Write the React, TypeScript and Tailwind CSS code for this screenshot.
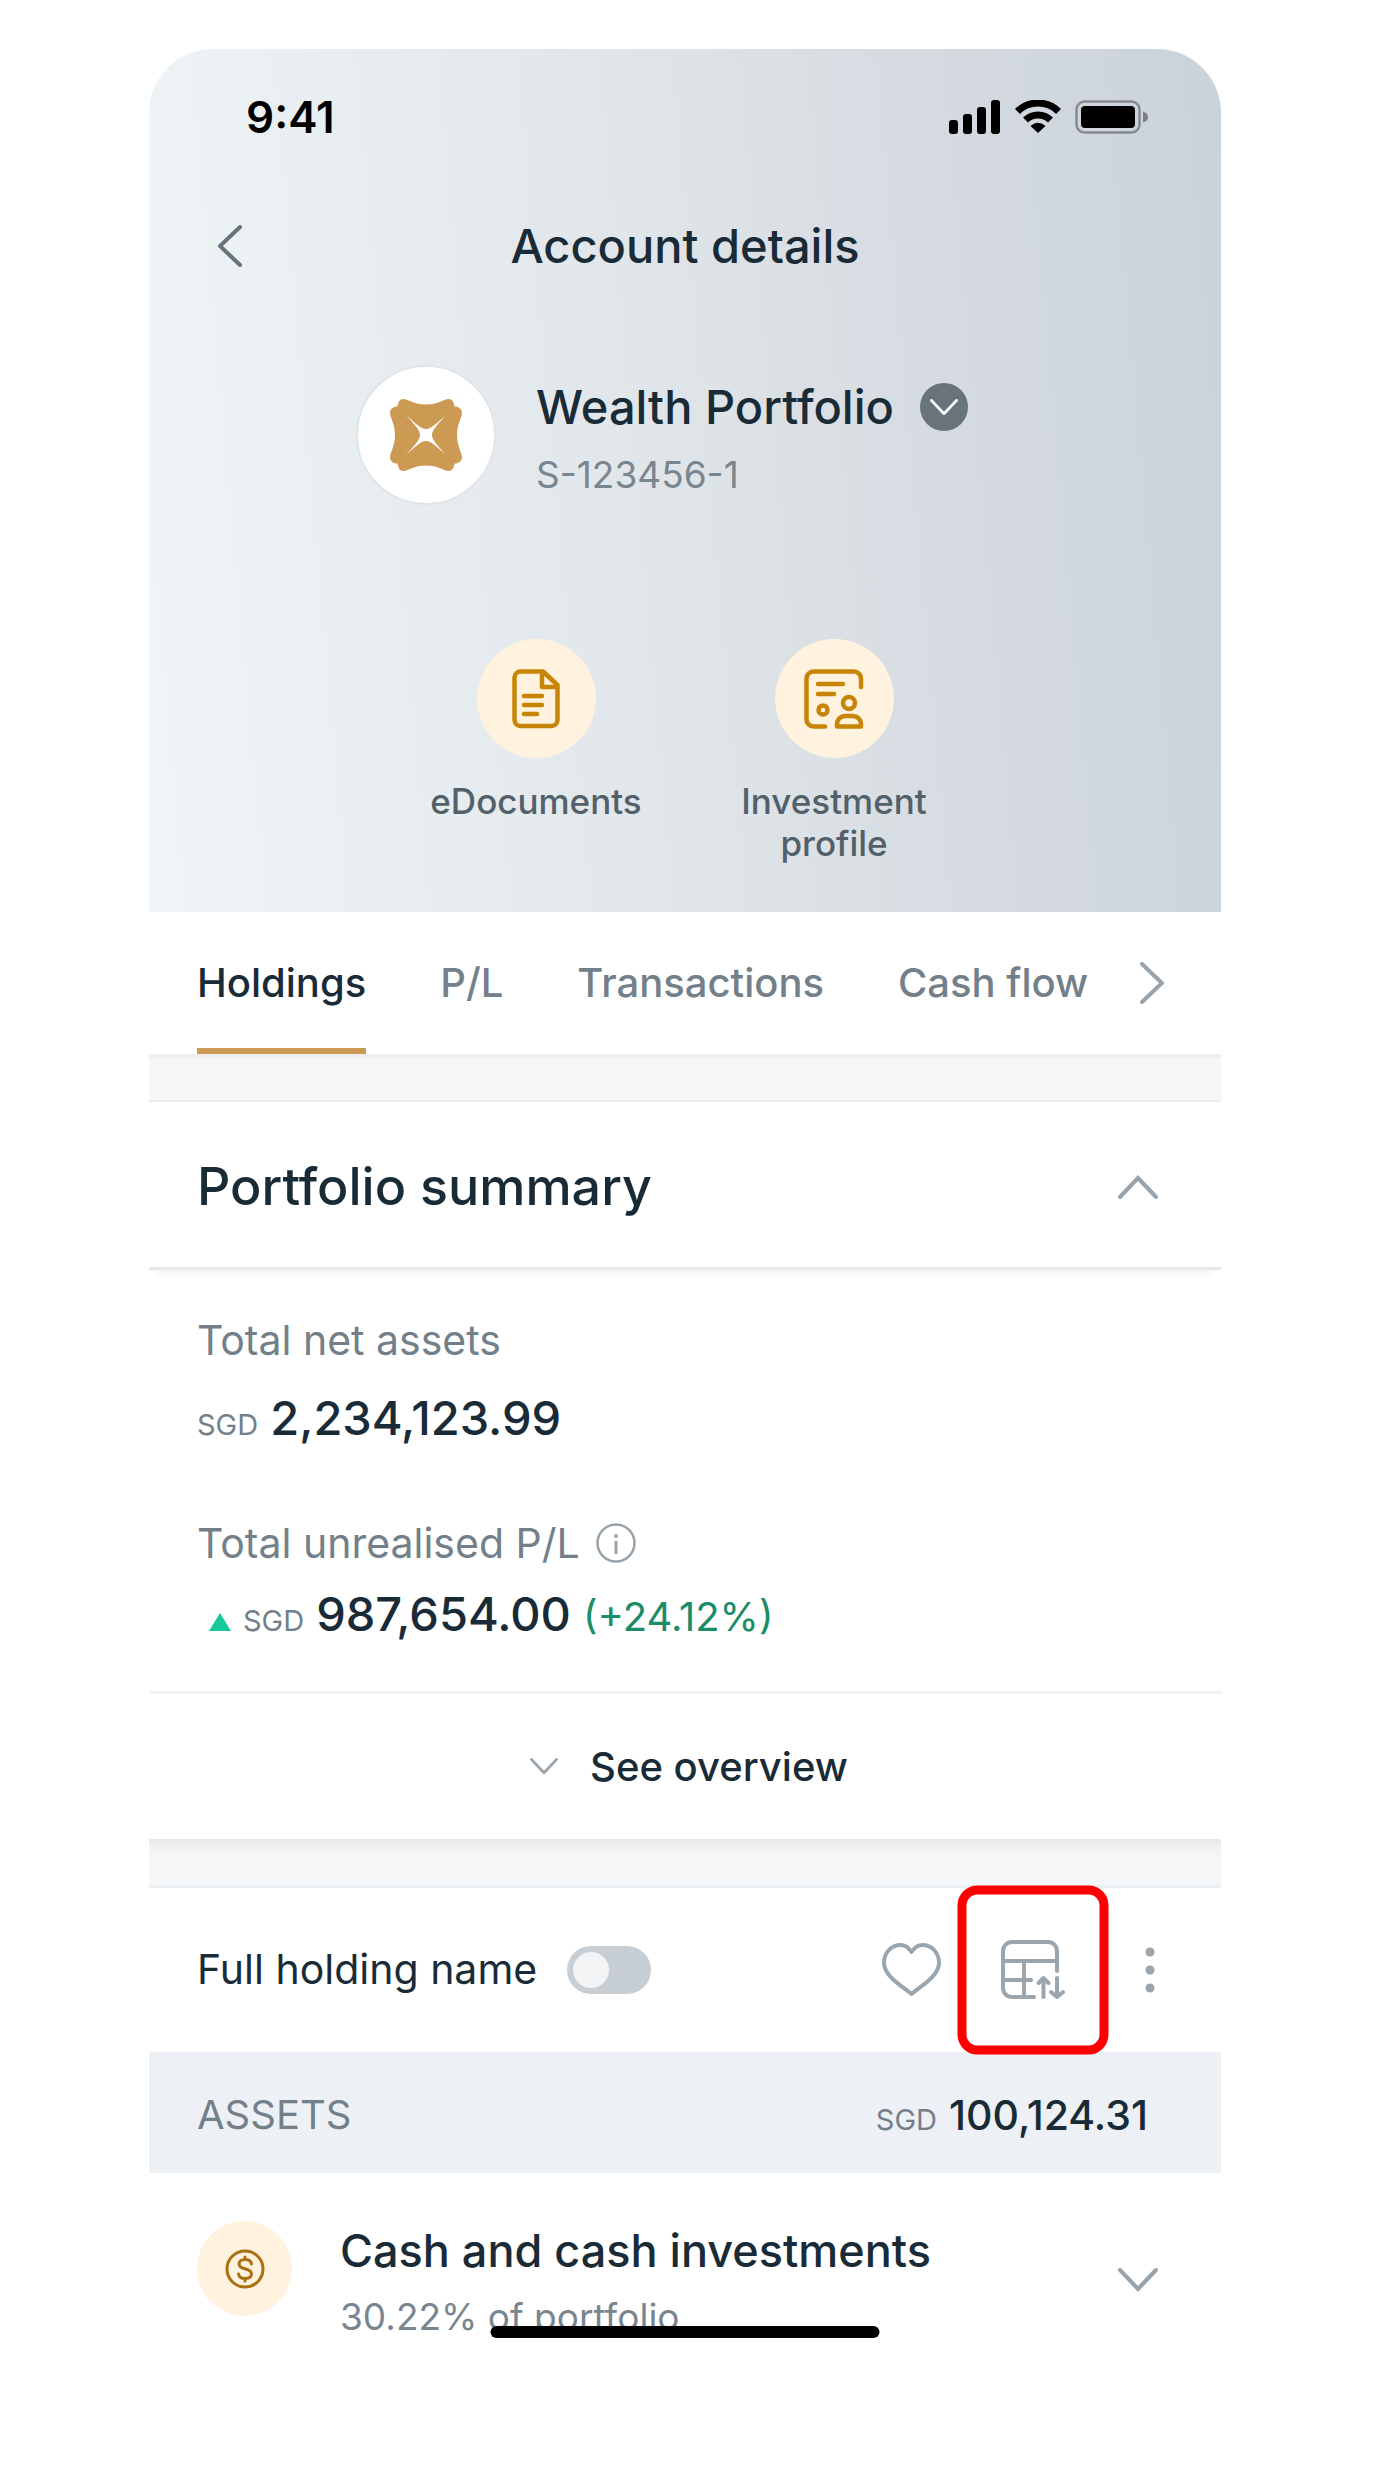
import { useState } from "react";
import clsx from "clsx";

type ChevronProps = {
  direction: "left" | "right" | "up" | "down";
  className?: string;
};

const chevronPaths = {
  left: "M22 2 L2 21 L22 40",
  right: "M2 2 L22 21 L2 40",
  up: "M2 22 L20 3 L38 22",
  down: "M2 2 L20 21 L38 2",
};

const Chevron = ({ direction, className }: ChevronProps) => {
  const vertical = direction === "up" || direction === "down";
  return (
    <svg
      viewBox={vertical ? "0 0 40 24" : "0 0 24 42"}
      className={className}
      fill="none"
      stroke="currentColor"
      strokeWidth="4"
      strokeLinecap="round"
      aria-hidden="true"
    >
      <path d={chevronPaths[direction]} />
    </svg>
  );
};

const StatusIcons = () => (
  <div className="flex items-center gap-[14px]">
    <svg viewBox="0 0 52 34" className="h-[34px] w-[52px]">
      <rect x="0" y="20" width="9" height="14" rx="3" />
      <rect x="14" y="14" width="9" height="20" rx="3" />
      <rect x="28" y="7" width="9" height="27" rx="3" />
      <rect x="42" y="0" width="9" height="34" rx="3" />
    </svg>
    <svg viewBox="0 0 46 34" className="h-[34px] w-[46px]">
      <path
        d="M2.5 11.5 A29 29 0 0 1 43.5 11.5 M10.5 20 A18 18 0 0 1 35.5 20"
        fill="none"
        stroke="#000"
        strokeWidth="7"
      />
      <path d="M23 33 L15.5 26 Q23 19.500 30.500 26 Z" />
    </svg>
    <svg viewBox="0 0 74 34" className="h-[34px] w-[74px]">
      <rect
        x="1.500"
        y="1.500"
        width="63"
        height="31"
        rx="8"
        fill="none"
        stroke="#000"
        strokeOpacity="0.35"
        strokeWidth="2.500"
      />
      <rect x="6" y="6" width="54" height="22" rx="4" />
      <path d="M68 11.500 Q73 13 73 17 Q73 21 68 22.500 Z" fillOpacity="0.4" />
    </svg>
  </div>
);

const Logo = () => (
  <svg viewBox="0 0 72 72" className="size-[72px]" aria-hidden="true">
    <path
      fill="#cc9a53"
      d="M13 0 C10 0 8 3 7.500 7.500 C3 7.500 0 10 0 14 C0 18 5 25 5 36 C5 47 0 54 0 58 C0 62 3 64.500 7.500 64.500 C8 69 10 72 13 72 C18 72 24 66.500 36 66.500 C48 66.500 54 72 59 72 C62 72 64 69 64.500 64.500 C69 64.500 72 62 72 58 C72 54 67 47 67 36 C67 25 72 18 72 14 C72 10 69 7.500 64.500 7.500 C64 3 62 0 59 0 C54 0 48 5.500 36 5.500 C24 5.500 18 0 13 0 Z"
    />
    <path
      fill="#fff"
      d="M16 16 C25 24 31 30 36 30 C41 30 47 24 56 16 C48 25 42 31 42 36 C42 41 48 47 56 56 C47 48 41 42 36 42 C31 42 25 48 16 56 C24 47 30 41 30 36 C30 31 24 25 16 16 Z"
    />
  </svg>
);

const DocumentIcon = () => (
  <svg
    viewBox="0 0 48 60"
    className="h-[60px] w-[48px]"
    fill="none"
    stroke="currentColor"
    strokeWidth="4.500"
    strokeLinecap="round"
    strokeLinejoin="round"
    aria-hidden="true"
  >
    <path d="M8 2.500 H31 L45.500 16 V51 a6 6 0 0 1 -6 6 H8.500 a6 6 0 0 1 -6 -6 V8.500 a6 6 0 0 1 6 -6 Z" />
    <path d="M30 3 V18 H45 M12 27 H30 M12 36 H30 M12 45 H25" />
  </svg>
);

const ProfileIcon = () => (
  <svg
    viewBox="0 0 60 60"
    className="size-[60px]"
    fill="none"
    stroke="currentColor"
    strokeWidth="4.500"
    strokeLinecap="round"
    strokeLinejoin="round"
    aria-hidden="true"
  >
    <path d="M21 57.500 H9.500 a7 7 0 0 1 -7 -7 V9.500 a7 7 0 0 1 7 -7 H50 a7 7 0 0 1 7 7 V18" />
    <path d="M14 15 H39 M14 25 H30" />
    <circle cx="19" cy="41" r="4.500" />
    <circle cx="45" cy="34" r="6" />
    <path d="M33 57.500 V55 a8 8 0 0 1 8 -8 H49 a8 8 0 0 1 8 8 V57.500 Z" />
  </svg>
);

const HeartIcon = () => (
  <svg
    viewBox="0 0 59 54"
    className="h-[54px] w-[59px]"
    fill="none"
    stroke="currentColor"
    strokeWidth="4"
    strokeLinejoin="round"
    aria-hidden="true"
  >
    <path d="M29.500 51 C20 43 2 33 2 20 C2 10 9 2 18.500 2 C23 2 27 5 29.500 9 C32 5 36 2 40.500 2 C50 2 57 10 57 20 C57 33 39 43 29.500 51 Z" />
  </svg>
);

const TableSortIcon = () => (
  <svg
    viewBox="0 0 64 60"
    className="h-[60px] w-[64px]"
    fill="none"
    stroke="currentColor"
    strokeWidth="4"
    strokeLinecap="round"
    strokeLinejoin="round"
    aria-hidden="true"
  >
    <path d="M33 57 H11 a9 9 0 0 1 -9 -9 V11 a9 9 0 0 1 9 -9 H47 a9 9 0 0 1 9 9 V31" />
    <path d="M2 21 H56 M23 21 V57 M2 40 H30" />
    <path d="M42.500 57 V39 M37.500 43 L42.500 38 L47.500 43" />
    <path d="M56 38 V56 M50 52 L56 57 L62 52" />
  </svg>
);

const InfoIcon = () => (
  <svg viewBox="0 0 40 40" className="size-10 text-[#98a3ab]" aria-hidden="true">
    <circle
      cx="20"
      cy="20"
      r="18.500"
      fill="none"
      stroke="currentColor"
      strokeWidth="2.500"
    />
    <circle cx="20" cy="13" r="2" fill="currentColor" />
    <path d="M20 18 V31" stroke="currentColor" strokeWidth="3" />
  </svg>
);

const DollarIcon = () => (
  <svg
    viewBox="0 0 40 40"
    className="size-10"
    fill="none"
    stroke="currentColor"
    strokeWidth="3"
    strokeLinecap="round"
    aria-hidden="true"
  >
    <circle cx="20" cy="20" r="18" />
    <path d="M26.500 15 C26 11.500 23 10.500 20 10.500 C16.500 10.500 14 12.500 14 15 C14 18 17 19 20 19.800 C23.500 20.800 26.500 21.800 26.500 25 C26.500 28 23.500 29.500 20 29.500 C16.500 29.500 14 28 13.500 25 M20 8 V10.500 M20 29.500 V32" />
  </svg>
);

type AmountProps = {
  value: string;
  large?: boolean;
};

const Amount = ({ value, large }: AmountProps) => (
  <span className="flex h-[60px] items-baseline gap-3 leading-[60px]">
    <span className="text-[29px] text-[#73808a]">SGD</span>
    <span
      className={clsx(
        "font-medium text-[#1a2b38]",
        large ? "text-[47px]" : "text-[41px]"
      )}
    >
      {value}
    </span>
  </span>
);

const tabs = ["Holdings", "P/L", "Transactions", "Cash flow"];

const App = () => {
  const [activeTab, setActiveTab] = useState("Holdings");
  const [fullName, setFullName] = useState(false);

  return (
    <div className="bg-white pt-[49px] pr-[153px] pb-[137px] pl-[149px] font-[Inter,sans-serif] text-[#1a2b38]">
      <main className="relative">
        <header className="rounded-t-[64px] bg-[linear-gradient(85deg,#f0f5f8_0%,#e0e5e9_48%,#d3d9df_78%,#cad2da_100%)] pt-10 pb-12">
          <div className="flex h-14 items-center justify-between pr-[72px] pl-[97px] text-black">
            <span className="text-[44px] leading-[56px] font-semibold">9:41</span>
            <StatusIcons />
          </div>

          <div className="mt-[69px] grid h-16 grid-cols-[1fr_auto_1fr] items-center px-[69px]">
            <button type="button" aria-label="Back" className="w-fit text-[#66727c]">
              <Chevron direction="left" className="h-[42px] w-6" />
            </button>
            <h1 className="text-[47px] leading-[64px] font-medium">Account details</h1>
          </div>

          <div className="mt-[87px] flex items-center justify-center gap-10 pr-[46px]">
            <div className="flex size-[140px] items-center justify-center rounded-full border-2 border-[#dfe5ea] bg-white">
              <Logo />
            </div>
            <div className="pt-2">
              <div className="flex items-center gap-[26px]">
                <h2 className="text-[47px] leading-[64px] font-medium">
                  Wealth Portfolio
                </h2>
                <button
                  type="button"
                  aria-label="Change account"
                  className="flex size-12 items-center justify-center rounded-full bg-[#68737c] text-white"
                >
                  <Chevron direction="down" className="w-7" />
                </button>
              </div>
              <p className="mt-2 text-[37px] leading-[56px] text-[#7a868f]">
                S-123456-1
              </p>
            </div>
          </div>

          <div className="mt-[134px] flex justify-center gap-14">
            <button type="button" className="flex w-[242px] flex-col items-center">
              <span className="flex size-[119px] items-center justify-center rounded-full bg-[#fff2df] text-[#c88405]">
                <DocumentIcon />
              </span>
              <span className="mt-[22px] text-[35px] leading-[42px] font-medium text-[#52606a]">
                eDocuments
              </span>
            </button>
            <button type="button" className="flex w-[242px] flex-col items-center">
              <span className="flex size-[119px] items-center justify-center rounded-full bg-[#fff2df] text-[#c88405]">
                <ProfileIcon />
              </span>
              <span className="mt-[22px] text-[35px] leading-[42px] font-medium text-[#52606a]">
                Investment profile
              </span>
            </button>
          </div>
        </header>

        <nav className="flex h-[146px] justify-between border-b-4 border-[#eceef0] pr-[57px] pl-12">
          <div className="flex gap-[74px]">
            {tabs.map((tab) => (
              <button
                key={tab}
                type="button"
                onClick={() => setActiveTab(tab)}
                className={clsx(
                  "border-b-[6px] pt-[6px] text-[40px] font-medium whitespace-nowrap",
                  tab === activeTab
                    ? "border-[#cc9a53] text-[#1a2b38]"
                    : "border-transparent text-[#73808a]"
                )}
              >
                {tab}
              </button>
            ))}
          </div>
          <button type="button" aria-label="More tabs" className="text-[#98a3ab]">
            <Chevron direction="right" className="h-[42px] w-6" />
          </button>
        </nav>

        <div className="h-11 border-b-2 border-[#eceff1] bg-[#f5f6f8]" />

        <section>
          <div className="flex h-[168px] items-center justify-between border-b-[3px] border-[#e6e9eb] pt-1 pr-[63px] pl-12 shadow-[0_12px_8px_-8px_rgba(0,0,0,0.06)]">
            <h2 className="text-[52px] font-medium">Portfolio summary</h2>
            <button
              type="button"
              aria-label="Collapse summary"
              className="text-[#98a3ab]"
            >
              <Chevron direction="up" className="w-10" />
            </button>
          </div>

          <div className="border-b-[3px] border-[#f0f2f4] px-12 pt-[42px] pb-[47px]">
            <p className="text-[41px] leading-[56px] text-[#73808a]">
              Total net assets
            </p>
            <div className="mt-5">
              <Amount value="2,234,123.99" large />
            </div>
            <div className="mt-[67px] flex items-center gap-4 text-[41px] leading-[56px] text-[#73808a]">
              Total unrealised P/L
              <InfoIcon />
            </div>
            <div className="mt-[13px] flex h-[60px] items-baseline gap-3 pl-3">
              <svg viewBox="0 0 22 18" className="h-[18px] w-[22px]" aria-hidden="true">
                <path d="M11 0 L22 18 H0 Z" fill="#17c998" />
              </svg>
              <Amount value="987,654.00" large />
              <span className="text-[40px] leading-[60px] text-[#1a8c67]">
                (+24.12%)
              </span>
            </div>
          </div>

          <button
            type="button"
            className="flex h-[145px] w-full items-center justify-center gap-8 pl-2 text-[40px] font-medium"
          >
            <Chevron direction="down" className="w-7 text-[#98a3ab]" />
            See overview
          </button>
        </section>

        <div className="h-[49px] border-b-[3px] border-[#eceff1] bg-[linear-gradient(#e6e8ea_0,#f0f1f3_8px,#f5f6f8_20px)]" />

        <div className="flex h-[164px] items-center justify-between pr-[66px] pl-12">
          <label className="flex items-center gap-[30px] text-[41px]">
            Full holding name
            <input
              type="checkbox"
              role="switch"
              checked={fullName}
              onChange={(e) => setFullName(e.target.checked)}
              className="flex h-12 w-[84px] appearance-none items-center rounded-full bg-[#c7ced4] px-[6px] before:size-9 before:rounded-full before:bg-[#f2f4f6] checked:justify-end checked:bg-[#cc9a53]"
            />
          </label>
          <div className="flex items-center text-[#9aa5ad]">
            <button type="button" aria-label="Favourites">
              <HeartIcon />
            </button>
            <button type="button" aria-label="Sort table" className="relative ml-[60px]">
              <TableSortIcon />
              <span className="absolute top-1/2 left-1/2 h-[169px] w-[151px] -translate-x-1/2 -translate-y-1/2 rounded-[20px] border-[9px] border-[#ff0000]" />
            </button>
            <button type="button" aria-label="More options" className="ml-20">
              <svg viewBox="0 0 10 46" className="h-[46px] w-[10px]" fill="currentColor">
                <circle cx="5" cy="5" r="4.500" />
                <circle cx="5" cy="23" r="4.500" />
                <circle cx="5" cy="41" r="4.500" />
              </svg>
            </button>
          </div>
        </div>

        <section>
          <div className="flex h-[121px] items-center justify-between bg-[#edf1f5] pt-1 pr-[73px] pl-12">
            <h3 className="text-[40px] text-[#73808a]">ASSETS</h3>
            <Amount value="100,124.31" />
          </div>

          <div className="flex h-[165px] gap-12 pt-12 pr-[63px] pl-12">
            <span className="flex size-[95px] shrink-0 items-center justify-center rounded-full bg-[#fff2df] text-[#a8700f]">
              <DollarIcon />
            </span>
            <div className="flex-1">
              <h4 className="text-[45px] leading-[60px] font-medium">
                Cash and cash investments
              </h4>
              <p className="mt-3 text-[37px] leading-[48px] text-[#7a868f]">
                30.22% of portfolio
              </p>
            </div>
            <button
              type="button"
              aria-label="Expand holdings"
              className="text-[#98a3ab]"
            >
              <Chevron direction="down" className="w-10" />
            </button>
          </div>
        </section>

        {/* home indicator */}
        <div className="absolute bottom-0 left-1/2 h-3 w-[389px] -translate-x-1/2 rounded-full bg-black" />
      </main>
    </div>
  );
};

export default App;
